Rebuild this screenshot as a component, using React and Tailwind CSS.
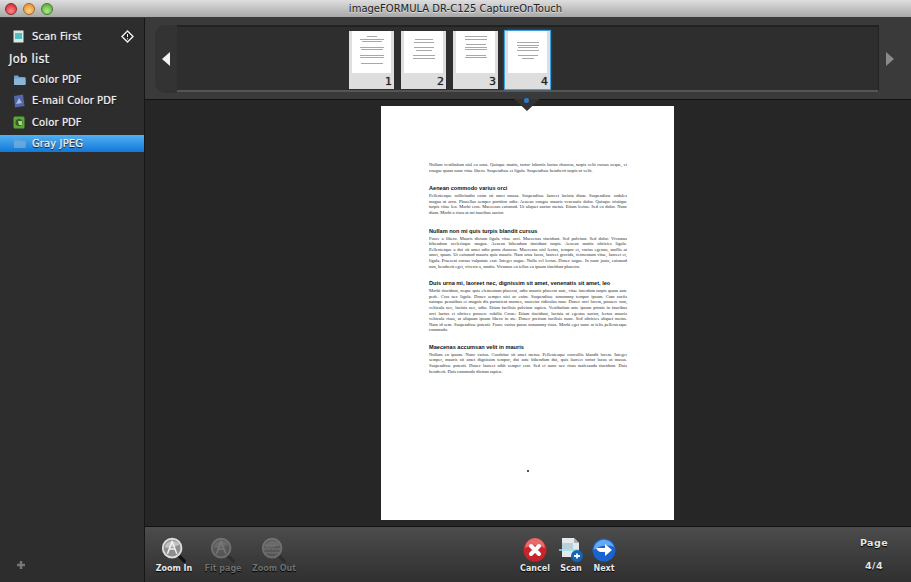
function Para({ lines, className = "" }) {
  return (
    <div className={`font-['Liberation_Serif',serif] text-[4.5px] leading-[5.6px] text-[#2a2a2a] ${className}`}>
      {lines.map((l, i) => (
        <span key={i} className={`block w-[198px] h-[5.6px] whitespace-nowrap ${i === lines.length - 1 ? "" : "[text-align-last:justify]"}`}>{l}</span>
      ))}
    </div>
  );
}

function Heading({ children, className = "" }) {
  return <div className={`font-['Liberation_Sans',sans-serif] font-bold text-[5.6px] leading-[7px] text-[#111] whitespace-nowrap ${className}`}>{children}</div>;
}

function Folder({ dim }) {
  return (
    <svg width="13" height="12" viewBox="0 0 13 12" className={dim ? "opacity-60" : ""}>
      <path d="M1 2.5 Q1 1.5 2 1.5 H5 L6 3 H11.5 Q12.5 3 12.5 4 V10 Q12.5 11 11.5 11 H2 Q1 11 1 10 Z" fill="#6fa4d0" />
      <path d="M1 4.5 H12.5 V10 Q12.5 11 11.5 11 H2 Q1 11 1 10 Z" fill="#8ab6da" />
    </svg>
  );
}

function SideRow({ icon, label, active }) {
  return (
    <div className={`flex items-center h-[17px] pl-[13px] ${active ? "bg-gradient-to-b from-[#4fb0f2] to-[#0f78d8]" : ""}`}>
      <span className="w-[19px] flex justify-start">{icon}</span>
      <span className="text-[10px] tracking-[0.1px] text-[#ececec] whitespace-nowrap [text-shadow:0_0_1px_#ccc,0_1px_1px_#000]">{label}</span>
    </div>
  );
}

function Thumb({ n, active, lines }) {
  return (
    <div className={`relative w-[45px] h-[58px] bg-[#dedede] ${active ? "outline outline-1 outline-[#3f9fe0] shadow-[0_0_3px_#3f9fe0]" : ""}`}>
      <div className="mx-[3px] h-[42px] bg-white pt-[5px] flex flex-col items-center gap-[1.5px]">
        {lines.map((w, i) => w === 0
          ? <div key={i} className="h-[1.5px]" />
          : <div key={i} className="h-[1px] bg-[#a8a8a8]" style={{ width: w }} />)}
      </div>
      <span className="absolute right-[2px] bottom-0 text-[11px] leading-[14px] text-[#222] font-['DejaVu_Sans',sans-serif] [text-shadow:0_0_1px_#555]">{n}</span>
    </div>
  );
}

function ZoomIcon({ dim, kind }) {
  return (
    <svg width="28" height="28" viewBox="0 0 30 30" className={dim ? "opacity-30" : ""}>
      <path d="M19 20 L26 27" stroke="#111" strokeWidth="3.5" strokeLinecap="round" />
      <circle cx="13" cy="13" r="10" fill="#8e8e8e" stroke="#dcdcdc" strokeWidth="2" />
      <path d="M5 12 A9 9 0 0 1 21 9 Q13 14 5 12 Z" fill="#c2c2c2" />
      {kind === "out"
        ? <path d="M5 10 H21 M4 14 H22 M6 18 H20" stroke="#e8e8e8" strokeWidth="1.5" strokeDasharray="2 1" />
        : <path d="M8 19 L13 6 L18 19 M10 14 H16" fill="none" stroke="#f2f2f2" strokeWidth="1.6" />}
    </svg>
  );
}

function Tool({ icon, label, dim, w }) {
  return (
    <div className={`flex flex-col items-center ${w}`}>
      <div className="h-[28px] flex items-center justify-center">{icon}</div>
      <span className={`mt-[-1px] text-[8px] leading-[11px] font-bold whitespace-nowrap [text-shadow:0_1px_1px_#000] ${dim ? "text-[#6f6f6f]" : "text-[#e8e8e8]"}`}>{label}</span>
    </div>
  );
}

export default function App() {
  return (
    <div className="w-[911px] h-[582px] overflow-hidden flex flex-col bg-[#262626] font-['DejaVu_Sans',sans-serif]">
      {/* Title bar */}
      <div className="relative h-[18px] shrink-0 bg-gradient-to-b from-[#dedede] to-[#a8a8a8] border-b border-[#3a3a3a] flex items-center justify-center">
        <div className="absolute left-[5px] top-[3px] flex gap-[6px]">
          <span className="w-[12px] h-[12px] rounded-full bg-[radial-gradient(circle_at_50%_70%,#f88,#c81e2c)] border border-[#8a2a30]" />
          <span className="w-[12px] h-[12px] rounded-full bg-[radial-gradient(circle_at_50%_70%,#fc8,#e08a20)] border border-[#9a6a2a]" />
          <span className="w-[12px] h-[12px] rounded-full bg-[radial-gradient(circle_at_50%_70%,#ae8,#4f9a2a)] border border-[#4a7a2a]" />
        </div>
        <span className="text-[10px] leading-none text-[#222] font-medium [text-shadow:0_1px_0_#ddd]">imageFORMULA DR-C125 CaptureOnTouch</span>
      </div>

      <div className="flex-1 flex min-h-0">
        {/* Sidebar */}
        <div className="relative w-[145px] shrink-0 bg-[#2d2d2d] border-r border-[#161616] flex flex-col">
          <div className="mt-[10px] flex items-center h-[17px] pl-[13px] pr-[10px]">
            <span className="w-[19px]">
              <svg width="11" height="13" viewBox="0 0 11 13"><rect x="0.5" y="0.5" width="10" height="12" fill="#d8e8e8" /><rect x="2" y="3" width="7" height="6" fill="#4fc0c0" /></svg>
            </span>
            <span className="flex-1 text-[10px] tracking-[0.1px] text-[#ececec] [text-shadow:0_0_1px_#ccc,0_1px_1px_#000]">Scan First</span>
            <svg width="13" height="13" viewBox="0 0 13 13"><path d="M6.5 1 L12 6.5 L6.5 12 L1 6.5 Z" fill="#222" stroke="#f2f2f2" strokeWidth="1.4" /><path d="M6.5 4 V7 M6.5 8.2 V9.4" stroke="#f2f2f2" /></svg>
          </div>
          <div className="mt-[5px] pl-[9px] h-[18px] text-[11.5px] leading-[18px] text-[#ececec] tracking-[0.3px] [text-shadow:0_0_1px_#ccc,0_1px_1px_#000]">Job list</div>
          <div className="mt-[3px] flex flex-col gap-[4.3px]">
            <SideRow icon={<Folder />} label="Color PDF" />
            <SideRow
              icon={<svg width="12" height="14" viewBox="0 0 12 14"><path d="M1 2 L10 0.5 L11.5 12 L2 13.5 Z" fill="#5468a8" /><path d="M3 10 L6 4 L9 9 Z" fill="#a8b8e0" /></svg>}
              label="E-mail Color PDF"
            />
            <SideRow
              icon={<svg width="12" height="13" viewBox="0 0 12 13"><rect x="0.5" y="0.5" width="11" height="12" rx="1.5" fill="#5aa832" /><circle cx="6" cy="6.5" r="3.5" fill="#355a2c" /><path d="M5 5 H9 V9 H6" fill="#a8d888" /></svg>}
              label="Color PDF"
            />
            <SideRow icon={<Folder dim />} label="Gray JPEG" active />
          </div>
          <svg width="10" height="10" viewBox="0 0 10 10" className="absolute left-[16px] bottom-[12px]"><path d="M5 1 V9 M1 5 H9" stroke="#777" strokeWidth="2.4" /></svg>
        </div>

        {/* Main */}
        <div className="flex-1 min-w-0 flex flex-col">
          {/* Filmstrip */}
          <div className="relative z-10 h-[82px] shrink-0 bg-[#3a3a3a] border-b border-[#111] pl-[10px] pt-[7px]">
            <div className="h-[68px] flex">
              <div className="w-[22px] rounded-l-[10px] bg-[#333] flex items-center justify-center">
                <svg width="8" height="14" viewBox="0 0 8 14"><path d="M8 0 V14 L0 7 Z" fill="#f2f2f2" /></svg>
              </div>
              <div className="w-[702px] h-[67px] bg-[#2e2e2e] border-t-2 border-t-[#222] border-b-2 border-b-[#555] border-r border-r-[#222] flex items-start gap-[7px] pl-[172px] pt-[4px]">
                <Thumb n="1" lines={[10, 24, 20, 0, 24, 22, 0, 24, 24, 0, 22]} />
                <Thumb n="2" lines={[0, 18, 20, 0, 20, 16, 0, 22, 22]} />
                <Thumb n="3" lines={[22, 22, 0, 20, 22, 22, 0, 20, 22]} />
                <Thumb n="4" active lines={[0, 0, 22, 22, 20, 22, 0, 20, 12]} />
              </div>
              <div className="w-[22px] flex items-center justify-center">
                <svg width="8" height="14" viewBox="0 0 8 14"><path d="M0 0 V14 L8 7 Z" fill="#8a8a8a" /></svg>
              </div>
            </div>
            <div className="absolute left-[369px] top-full w-0 h-0 border-l-[13px] border-r-[13px] border-t-[12px] border-l-transparent border-r-transparent border-t-[#333]" />
            <div className="absolute left-[379px] top-[80px] w-[5px] h-[5px] rounded-full bg-[#2b7ec8]" />
          </div>

          {/* Page area */}
          <div className="flex-1 min-h-0 flex justify-center pt-[6px] pr-[1px] bg-[#262626]">
            <div className="relative w-[293px] h-[414px] bg-white pl-[48px] pt-[56px]">
              <Para lines={[
                "Nullam vestibulum nisl eu urna. Quisque mattis, tortor lobortis luctus rhoncus, turpis velit cursus neque, et",
                "congue quam nunc vitae libero. Suspendisse et ligula. Suspendisse hendrerit turpis ut velit.",
              ]} />
              <Heading className="mt-[12px]">Aenean commodo varius orci</Heading>
              <Para className="mt-[1px]" lines={[
                "Pellentesque sollicitudin enim sit amet massa. Suspendisse laoreet lacinia diam. Suspendisse sodales",
                "magna ut arcu. Phasellus semper porttitor odio. Aenean congue mauris venenatis dolor. Quisque tristique",
                "turpis vitae leo. Morbi eros. Maecenas euismod. Ut aliquet auctor metus. Etiam lectus. Sed eu dolor. Nunc",
                "diam. Morbi a risus at mi faucibus auctor.",
              ]} />
              <Heading className="mt-[12px]">Nullam non mi quis turpis blandit cursus</Heading>
              <Para className="mt-[1px]" lines={[
                "Fusce a libero. Mauris dictum ligula vitae orci. Maecenas tincidunt. Sed pulvinar. Sed dolor. Vivamus",
                "bibendum scelerisque magna. Aenean bibendum tincidunt turpis. Aenean mattis ultricies ligula.",
                "Pellentesque a dui sit amet odio porta rhoncus. Maecenas nisl lectus, tempor et, varius egestas, mollis ut",
                "amet, quam. Ut euismod mauris quis mauris. Nam urna lacus, laoreet gravida, fermentum vitae, laoreet et,",
                "ligula. Praesent cursus vulputate erat. Integer augue. Nulla vel lectus. Donec augue. In nunc justo, euismod",
                "non, hendrerit eget, viverra a, mattis. Vivamus eu tellus eu ipsum tincidunt pharetra.",
              ]} />
              <Heading className="mt-[11px]">Duis urna mi, laoreet nec, dignissim sit amet, venenatis sit amet, leo</Heading>
              <Para className="mt-[1px]" lines={[
                "Morbi tincidunt, neque quis elementum placerat, odio mauris placerat ante, vitae interdum turpis quam ante",
                "pede. Cras nec ligula. Donec semper nisi ac enim. Suspendisse nonummy tempor ipsum. Cum sociis",
                "natoque penatibus et magnis dis parturient montes, nascetur ridiculus mus. Donec orci lorem, posuere non,",
                "vehicula nec, lacinia nec, odio. Etiam facilisis pulvinar sapien. Vestibulum ante ipsum primis in faucibus",
                "orci luctus et ultrices posuere cubilia Curae; Etiam tincidunt, lacinia ut egestas auctor, lectus mauris",
                "vehicula risus, at aliquam ipsum libero in ate. Donec pretium facilisis nunc. Sed ultricies aliquet metus.",
                "Nam id sem. Suspendisse potenti. Fusce varius purus nonummy risus. Morbi eget nunc at felis pellentesque",
                "commodo.",
              ]} />
              <Heading className="mt-[11px]">Maecenas accumsan velit in mauris</Heading>
              <Para className="mt-[1px]" lines={[
                "Nullam eu ipsum. Nunc varius. Curabitur sit amet metus. Pellentesque convallis blandit lorem. Integer",
                "semper, mauris sit amet dignissim tempor, dui ante bibendum dui, quis laoreet tortor lacus ut massa.",
                "Suspendisse potenti. Donec laoreet nibh semper erat. Sed et nunc nec risus malesuada tincidunt. Duis",
                "hendrerit. Duis commodo dictum sapien.",
              ]} />
              <div className="absolute left-[146px] top-[364px] w-[2px] h-[2px] bg-[#555]" />
            </div>
          </div>

          {/* Toolbar */}
          <div className="h-[56px] shrink-0 border-t border-[#111] bg-gradient-to-b from-[#4c4c4c] to-[#303030] flex pt-[9px]">
            <div className="ml-[5px] flex">
              <Tool w="w-[48px]" label="Zoom In" icon={<ZoomIcon />} />
              <Tool w="w-[50px]" dim label="Fit page" icon={<ZoomIcon dim />} />
              <Tool w="w-[52px]" dim label="Zoom Out" icon={<ZoomIcon dim kind="out" />} />
            </div>
            <div className="ml-[217px] flex">
              <Tool w="w-[36px]" label="Cancel" icon={
                <svg width="24" height="24" viewBox="0 0 24 24"><circle cx="12" cy="12" r="11.5" fill="#c8242c" /><path d="M2 10 A10 10 0 0 1 22 10 Q12 5 2 10 Z" fill="#e86a6a" /><path d="M8 8 L16 16 M16 8 L8 16" stroke="#fff" strokeWidth="4" strokeLinecap="round" /></svg>
              } />
              <Tool w="w-[36px]" label="Scan" icon={
                <svg width="24" height="26" viewBox="0 0 24 26"><path d="M3 1 H15 L20 6 V20 H3 Z" fill="#e4eaec" /><path d="M15 1 L20 6 H15 Z" fill="#a8b0b4" /><path d="M3 6 H14 V12 H3 Z" fill="#b8d0d8" /><path d="M0 13 H20" stroke="#8ee0e8" strokeWidth="1.5" /><circle cx="18" cy="19" r="6" fill="#1466b8" /><path d="M15 19 H21 M18 16.5 V21.5" stroke="#fff" strokeWidth="1.8" /></svg>
              } />
              <Tool w="w-[30px]" label="Next" icon={
                <svg width="24" height="24" viewBox="0 0 24 24"><circle cx="12" cy="12" r="11.5" fill="#1a62d0" /><path d="M1.5 12 A10.5 10.5 0 0 1 22 9 Q12 5 1.5 12 Z" fill="#66a8ee" /><path d="M4 10 H13 V6 L20 12 L13 18 V14 H9 Q6 14 4 10 Z" fill="#fff" /></svg>
              } />
            </div>
            <div className="ml-auto w-[74px] flex flex-col items-center">
              <span className="text-[9.5px] leading-[13px] font-bold text-[#e4e4e4] tracking-[0.4px] [text-shadow:0_1px_1px_#000]">Page</span>
              <span className="mt-[10px] text-[9.5px] leading-[13px] font-bold text-[#e4e4e4] tracking-[0.4px] [text-shadow:0_1px_1px_#000]">4/4</span>
            </div>
          </div>
        </div>
      </div>
    </div>
  );
}
